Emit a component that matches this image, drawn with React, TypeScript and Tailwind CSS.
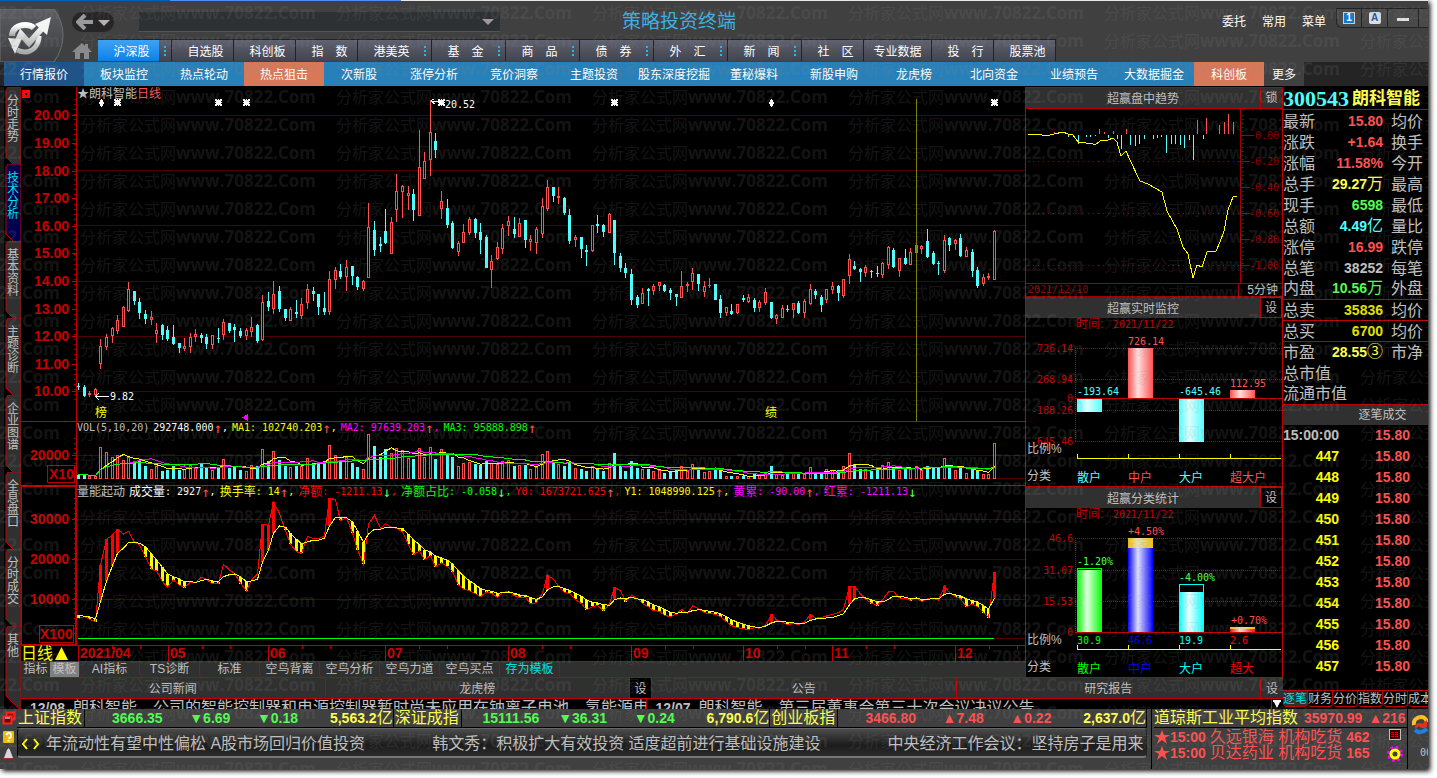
import React from "react";
import clsx from "clsx";

const MAIN_TABS = [
  { label: "沪深股", menu: true, active: true },
  { label: "自选股" },
  { label: "科创板" },
  { label: "指　数" },
  { label: "港美英", menu: true },
  { label: "基　金", menu: true },
  { label: "商　品", menu: true },
  { label: "债　券", menu: true },
  { label: "外　汇", menu: true },
  { label: "新　闻", menu: true },
  { label: "社　区" },
  { label: "专业数据", wide: true },
  { label: "投　行" },
  { label: "股票池" },
];

const SUB_TABS = [
  { label: "行情报价", style: "w-20 bg-[#205488]" },
  { label: "板块监控", style: "w-20" },
  { label: "热点轮动", style: "w-20" },
  { label: "热点狙击", style: "w-20 bg-[#d87858]" },
  { label: "次新股", style: "w-[70px]" },
  { label: "涨停分析", style: "w-20" },
  { label: "竞价洞察", style: "w-20" },
  { label: "主题投资", style: "w-20" },
  { label: "股东深度挖掘", style: "w-20" },
  { label: "董秘爆料", style: "w-20" },
  { label: "新股申购", style: "w-20" },
  { label: "龙虎榜", style: "w-20" },
  { label: "北向资金", style: "w-20" },
  { label: "业绩预告", style: "w-20" },
  { label: "大数据掘金", style: "w-20" },
  { label: "科创板", style: "w-[70px] bg-[#d87858]" },
];

const SIDE_TABS = ["分时走势", "技术分析", "基本资料", "主题诊断", "企业图谱", "全息盘口", "分时成交"];

const INDICATOR_TABS = ["AI指标", "TS诊断", "标准", "空鸟背离", "空鸟分析", "空鸟力道", "空鸟买点"];

// direction, high, body top, body bottom, low - in thirds of a pixel
const CANDLES = `d 893 902 906 915,d 899 905 933 936,u 918 925 930 936,u 908 912 930 936,u 762 783 837 852,u 747 757 786 795,u 726 730 753 774,u 690 705 738 747,u 663 667 726 726,u 591 612 678 681,
d 618 618 648 660,d 639 650 684 702,d 675 687 703 717,u 678 696 706 720,u 714 735 747 774,d 716 719 751 765,d 723 735 763 768,d 720 755 777 781,d 774 774 790 804,u 759 783 792 798,
u 744 756 786 804,u 732 748 756 771,d 744 750 759 774,d 747 755 777 792,u 750 750 779 792,d 729 759 762 774,u 702 711 750 765,d 714 714 738 744,d 717 726 736 771,d 729 738 752 759,
u 729 735 752 765,u 696 726 742 756,d 717 720 768 774,u 630 650 765 768,d 621 648 667 678,u 588 627 672 687,d 603 618 672 681,d 672 672 699 708,u 666 672 708 708,d 645 681 686 699,
u 639 657 692 702,u 597 612 654 672,d 606 617 627 648,d 627 627 666 690,d 621 669 680 690,u 558 582 681 690,u 546 555 584 612,d 537 558 576 582,u 525 546 576 618,d 543 543 573 600,
d 573 576 606 615,u 585 588 612 618,u 354 426 578 579,d 408 434 495 513,d 456 477 483 501,d 372 437 474 477,u 396 411 507 507,u 267 318 375 411,u 300 303 321 399,u 303 323 333 375,
d 312 327 375 408,u 135 246 393 393,u 201 228 282 282,u 45 141 225 273,d 144 168 195 219,u 318 348 372 402,d 342 369 420 429,d 408 414 489 492,u 468 474 501 513,u 417 441 474 474,
u 396 402 444 450,d 399 402 444 459,d 414 441 465 507,d 450 456 549 549,u 510 528 555 609,u 471 486 522 525,u 417 429 492 507,u 393 408 423 453,d 396 432 447 459,u 399 414 456 456,
d 405 405 465 489,u 450 462 471 498,u 426 432 474 507,u 339 363 447 459,u 285 306 372 378,d 306 306 333 351,u 306 333 339 357,d 336 339 384 390,d 372 390 468 477,u 450 456 465 486,
d 456 456 492 519,d 480 495 501 543,u 420 420 498 501,d 390 417 423 444,d 417 420 441 456,u 384 387 444 444,d 405 405 504 540,d 504 513 549 561,d 534 549 564 579,d 552 567 645 660,
d 630 636 660 669,u 609 624 657 657,d 609 612 618 663,u 597 603 618 630,u 591 591 603 618,d 597 600 618 621,d 609 615 624 645,d 627 627 636 663,u 558 603 639 639,u 591 597 603 621,
u 549 564 591 615,d 567 567 597 618,u 588 603 621 636,u 579 599 603 609,d 597 597 645 645,d 630 642 684 699,u 666 666 684 693,d 657 678 687 690,u 657 657 684 687,d 630 639 645 651,
u 627 636 651 654,d 639 645 669 681,u 645 651 669 681,u 609 621 654 660,d 651 651 699 702,u 687 690 702 717,u 660 669 699 699,d 660 672 675 681,u 654 654 675 699,d 648 654 684 687,
u 642 648 684 699,u 597 612 657 660,d 612 618 630 642,d 630 636 660 681,u 612 612 645 654,u 591 603 615 627,d 600 603 624 648,u 582 582 633 639,u 507 522 573 597,d 528 543 552 555,
d 549 552 561 591,u 540 546 564 576,d 555 558 561 579,d 543 564 567 576,u 531 534 570 579,u 483 486 540 552,d 489 495 546 549,u 519 519 558 576,d 492 519 537 540,u 489 501 540 540,
u 471 480 504 522,u 480 483 492 507,d 432 468 516 519,d 498 504 537 540,d 528 534 537 570,u 450 465 558 564,d 456 459 480 498,u 462 465 477 495,d 447 459 513 516,u 486 495 516 516,
d 492 501 558 576,d 546 555 603 609,u 567 576 597 603,u 564 573 579 585,u 435 438 585 585`
  .split(",")
  .map((row) => {
    const [dir, ...rest] = row.trim().split(" ");
    const [high, top, bottom, low] = rest.map((n) => Math.round(Number(n) / 3) - 14);
    return { up: dir === "u", high, top, bottom, low };
  });

const toNumbers = (s: string) => s.trim().split(/\s+/).map(Number);

const VOLUME_TOPS = toNumbers(`
225 224 227 228 142 157 171 166 181 172 187 180 198 208 198 213 210 198 210 208 196 204 193 205 210 204 178 203 202 210
213 196 197 148 184 154 181 198 202 198 199 174 189 193 184 136 166 187 171 189 201 208 102 138 171 148 160 145 150 174
177 145 172 142 177 148 160 172 199 189 187 192 196 184 190 193 184 181 198 196 195 208 201 163 154 187 192 198 189 205
208 213 198 204 213 190 159 199 213 183 204 208 208 214 211 219 216 211 198 213 193 205 216 213 210 210 229 228 229 229
229 223 223 219 198 222 224 222 220 222 221 202 219 222 208 210 211 199 160 192 208 208 213 211 196 187 204 211 208 208
199 210 198 204 204 175 202 210 204 220 208 211 223 223 130`);

const ENERGY_FAST = toNumbers(`
655 650 658 665 495 418 405 388 402 394 427 434 470 508 512 545 562 540 556 562 547 547 532 538 552 550 493 510 520 550
572 540 522 373 376 307 340 392 433 455 460 409 416 416 408 294 300 362 353 398 449 493 372 346 385 371 382 385 395 434
464 453 479 467 500 489 500 515 555 567 572 581 590 576 580 592 578 574 587 592 592 612 608 580 525 538 558 578 580 599
611 629 620 616 632 612 562 572 604 586 596 611 620 632 634 646 650 642 628 640 618 626 638 641 643 650 665 677 683 686
689 682 685 676 643 660 667 674 670 674 666 643 655 652 648 643 638 628 559 559 582 597 610 616 600 576 575 594 596 601
592 605 597 595 600 559 578 590 596 620 612 620 638 653 517`);

const ENERGY_SLOW = toNumbers(`
646 649 651 656 605 543 497 460 444 428 427 430 440 462 480 502 522 530 537 545 545 547 542 538 543 545 530 524 522 530
545 543 538 486 450 400 378 382 400 418 432 425 421 421 414 378 352 352 353 366 393 427 402 388 388 382 382 384 385 403
420 434 449 456 468 474 481 492 513 528 542 554 566 571 574 580 578 576 580 585 586 593 598 590 570 560 560 565 571 580
589 600 607 609 614 616 599 594 596 592 597 598 606 614 621 628 637 640 636 637 632 629 631 634 637 641 650 659 667 673
677 681 683 678 669 664 664 667 669 671 670 661 657 656 654 652 647 641 614 597 592 594 599 605 606 598 588 588 592 596
594 598 598 596 597 583 580 585 588 597 602 606 617 627 594`);

const ENERGY_BURSTS = new Set([4, 5, 6, 7, 33, 34, 35, 45, 84, 96, 124, 131, 138, 139, 155, 164]);

const MONO = "font-['DejaVu_Sans_Mono','Noto_Sans_CJK_SC',monospace]";

const barX = (i: number) => Math.round(1 + i * 5.585);

function movingAverage(values: number[], size: number) {
  return values.map((_, i) => {
    const part = values.slice(Math.max(0, i - size + 1), i + 1);
    return part.reduce((a, b) => a + b, 0) / part.length;
  });
}

function toPoints(values: number[], offset: number) {
  return values.map((v, i) => `${barX(i) + 0.5},${(v / 3 - offset).toFixed(1)}`).join(" ");
}

function Watermark() {
  return (
    <svg className="pointer-events-none absolute inset-0 h-full w-full" aria-hidden="true">
      <defs>
        <pattern id="mark" width="256" height="28" x="80" y="0" patternUnits="userSpaceOnUse">
          <text y="19" fill="#8a8a8a" fillOpacity="0.14">
            <tspan className="font-['Noto_Sans_CJK_SC',sans-serif] text-[16px]">分析家公式网</tspan>
            <tspan className="font-['Open_Sans',sans-serif] text-[17px] font-bold">www.70822.Com</tspan>
          </text>
        </pattern>
      </defs>
      <rect width="100%" height="100%" fill="url(#mark)" />
    </svg>
  );
}

function Logo() {
  return (
    <svg width="64" height="53" viewBox="0 0 64 53" className="block">
      <defs>
        <linearGradient id="silver" x1="0" y1="0" x2="0" y2="1">
          <stop offset="0" stopColor="#ffffff" />
          <stop offset="1" stopColor="#a8a8a8" />
        </linearGradient>
        <linearGradient id="plate" x1="0" y1="0" x2="0" y2="1">
          <stop offset="0" stopColor="#5c5e62" />
          <stop offset="1" stopColor="#3a3c40" />
        </linearGradient>
      </defs>
      <path d="M0 0H54Q63 12 63 26T54 53H0Z" fill="url(#plate)" stroke="#6c6e72" />
      <g fill="none" stroke="url(#silver)">
        <path d="M12 27C12 20 18 16 25 16C29 16 32 17 34 19" strokeWidth="6" />
        <path d="M39 27C39 36 33 43 25 43C22 43 19 42 17 41" strokeWidth="5" />
        <path d="M14 40L21 25L29 34L45 16" strokeWidth="6" />
      </g>
      <path d="M51 8L47 26L35 15Z" fill="#f4f4f4" />
      <path d="M8 29L15 45L21 30Z" fill="#e4e4e4" />
    </svg>
  );
}

function Header() {
  return (
    <header className="flex h-[61px] bg-[#404040] text-xs text-white">
      <div className="w-16 shrink-0 pt-2">
        <Logo />
      </div>
      <div className="flex min-w-0 flex-1 flex-col">
        <div className="flex h-[38px] items-center pt-1 pl-2">
          <div className="flex h-5 w-[42px] items-center justify-center gap-1 rounded-full bg-[#262626]">
            <button aria-label="后退">
              <svg width="18" height="16" viewBox="0 0 18 16">
                <path d="M9 1L2 8L9 15M2 8H17" fill="none" stroke="#9a9a9e" strokeWidth="4" />
              </svg>
            </button>
            <button aria-label="历史">
              <svg width="12" height="7">
                <path d="M0 1H12L6 7Z" fill="#b8b0b0" />
              </svg>
            </button>
          </div>
          <div className="ml-[25px] flex h-5 w-[361px] items-center border-b border-[#555] bg-[#2d3134] pr-1.5">
            <input aria-label="地址" className="h-full min-w-0 flex-1 bg-transparent px-2 outline-none" />
            <button aria-label="展开地址">
              <svg width="12" height="6">
                <path d="M0 0H12L6 6Z" fill="#a09898" />
              </svg>
            </button>
          </div>
          <h1 className="ml-[122px] text-[19px] leading-5 whitespace-nowrap text-[#3cb0e4]">策略投资终端</h1>
          <nav className="ml-auto flex gap-4">
            <a href="#trade">委托</a>
            <a href="#common">常用</a>
            <a href="#menu">菜单</a>
          </nav>
          <div className="mb-2 ml-2.5 flex h-5 w-[92px] overflow-hidden rounded-bl-md border border-r-0 border-[#222] bg-[#4a4a4a]">
            <button aria-label="屏幕一" className="flex w-[25px] items-center justify-center border-r border-[#222]">
              <span className="flex h-3 w-3 items-center justify-center border border-[#ccc] bg-[#1878d0] text-[10px] leading-3 font-bold">1</span>
            </button>
            <button aria-label="字体" className="flex w-[26px] items-center justify-center border-r border-[#222]">
              <span className="flex h-3 w-3 items-center justify-center rounded-xs bg-[#ddd] text-[10px] leading-3 font-bold text-[#1858b8]">A</span>
            </button>
            <button aria-label="最小化" className="flex w-[31px] items-center justify-center border-r border-[#222]">
              <span className="mt-0.5 h-[3px] w-3 bg-[#e8e0e0]" />
            </button>
          </div>
        </div>
        <nav className="flex h-[23px] pl-2">
          <a href="#home" aria-label="首页" className="flex w-[26px] items-center">
            <svg width="20" height="17" viewBox="0 0 20 17">
              <path d="M10 1L0 10H3V17H8V11H12V17H17V10H20L16 6V2H13V4Z" fill="#8a8a8e" />
            </svg>
          </a>
          {MAIN_TABS.map((tab) => (
            <button
              key={tab.label}
              className={clsx(
                "flex h-[22px] shrink-0 border-t border-r border-t-[#222] border-r-[#222] bg-linear-to-b from-[#5f6270] to-[#42444e]",
                tab.menu ? "w-[74px]" : tab.wide ? "w-[68px]" : "w-[62px]"
              )}
            >
              <span className={clsx("flex h-full flex-1 items-center justify-center pt-0.5 whitespace-nowrap", !tab.wide && "pl-1.5", tab.active && "bg-linear-to-b from-[#38a4f8] to-[#0880e8]")}>
                {tab.label}
              </span>
              {tab.menu && (
                <span className="flex h-full w-3 flex-col items-center justify-center gap-0.5">
                  <i className="h-0.5 w-0.5 bg-[#10c0ff]" />
                  <i className="h-0.5 w-0.5 bg-[#10c0ff]" />
                  <i className="h-0.5 w-0.5 bg-[#10c0ff]" />
                </span>
              )}
            </button>
          ))}
        </nav>
      </div>
    </header>
  );
}

function SubNav() {
  return (
    <nav className="flex h-[25px] border-b border-black bg-[#242424] pl-1 text-xs text-white">
      <div className="flex bg-[#2880b8]">
        {SUB_TABS.map((tab) => (
          <button key={tab.label} className={clsx("h-full pt-0.5 whitespace-nowrap", tab.style)}>
            {tab.label}
          </button>
        ))}
      </div>
      <button className="w-10 bg-[#404040] pt-0.5">更多</button>
    </nav>
  );
}

function SideTab({ label, active, last }: { label: string; active?: boolean; last?: boolean }) {
  return (
    <button className={clsx("relative flex w-full justify-center pt-2", last ? "flex-1" : "h-[77px]", active ? "text-[#00e0e0]" : "text-[#c0c0c0]")}>
      <svg className="absolute inset-0 block" width="16" height="84">
        <path d="M1 70V3L3 0H16V83H14Z" fill={active ? "#000050" : "#303030"} stroke="#c00000" />
      </svg>
      <span className="relative w-3 text-xs leading-3 break-all">{label}</span>
    </button>
  );
}

function PriceAxis() {
  return (
    <svg width="55" height="334" className="block shrink-0" shapeRendering="crispEdges">
      <rect x="2" y="4" width="5" height="5" fill="none" stroke="#ff0000" strokeWidth="3" />
      <path d="M53.5 12V313" stroke="#c00000" strokeDasharray="1 4" />
      {Array.from({ length: 11 }, (_, i) => {
        const y = Math.round(28.3 + i * 27.6);
        return (
          <g key={i}>
            <path d={`M51 ${y + 0.5}H55`} stroke="#c00000" />
            <text x="48" y={y + 5} textAnchor="end" className="fill-[#c80000] text-sm font-bold">
              {(20 - i).toFixed(2)}
            </text>
          </g>
        );
      })}
    </svg>
  );
}

const FLAGS = [
  { x: 24, small: true },
  { x: 40 },
  { x: 141 },
  { x: 169 },
  { x: 364 },
  { x: 537 },
  { x: 694, small: true },
  { x: 917 },
];

function PriceChart() {
  return (
    <svg className="block h-[322px] w-full" shapeRendering="crispEdges">
      {[16, 71, 126, 182, 237, 292].map((y) => (
        <line key={y} x1="0" x2="100%" y1={y + 0.5} y2={y + 0.5} stroke="#500000" />
      ))}
      {CANDLES.map((c, i) => {
        const x = barX(i);
        const h = Math.max(1, c.bottom - c.top);
        return (
          <g key={i} fill={c.up ? "#ff5050" : "#50ffff"}>
            <rect x={x} y={c.high} width="1" height={Math.max(1, c.low - c.high)} />
            <rect x={x - 1} y={c.top} width="3" height={h} />
            {c.up && h > 2 && <rect x={x} y={c.top + 1} width="1" height={h - 2} fill="#000" />}
          </g>
        );
      })}
      <path d="M839.5 0V322" stroke="#808000" />
      {FLAGS.map((f) => (
        <path
          key={f.x}
          d={f.small ? `M${f.x} 0h1v1h1v2h1v2h-1v2h-1v1h-1v-1h-1v-2h-1v-2h1v-2h1z` : `M${f.x - 3} 0h2v1h1v-1h1v1h1v-1h2v2h-1v1h1v1h-1v1h1v2h-2v-1h-1v1h-1v-1h-1v1h-2v-2h1v-1h-1v-1h1v-1h-1z`}
          fill="#fff"
        />
      ))}
      <path d="M354 2H366M354 2L358 -1M354 2L358 5" fill="none" stroke="#fff" />
      <text x="368" y="9" className={clsx(MONO, "fill-white text-[10px]")}>20.52</text>
      <path d="M18.5 297.5H32M18.5 297.5L22 294M18.5 297.5L22 301" fill="none" stroke="#fff" />
      <text x="33" y="301" className={clsx(MONO, "fill-white text-[10px]")}>9.82</text>
      <text x="18" y="318" className="fill-[#ffff00] text-xs">榜</text>
      <text x="688" y="318" className="fill-[#ffff00] text-xs">绩</text>
      <path d="M165 318.5L171 315V322Z" fill="#ff00ff" />
    </svg>
  );
}

type LegendItem = { name?: string; code?: string; value: string; trend?: "up" | "down"; color: string };

function Legend({ title, items }: { title: string; items: LegendItem[] }) {
  return (
    <div className={clsx(MONO, "flex h-3 items-center gap-1 text-[10px] leading-3 whitespace-pre")}>
      {title.startsWith("VOL") ? <span className="text-[#c0c0c0]">{title}</span> : <span className="text-xs leading-3 text-[#c0c0c0]">{title}</span>}
      {items.map((item, i) => (
        <span key={i} className={clsx("flex items-center", item.color)}>
          {item.name && <span className="text-xs leading-3">{item.name}</span>}
          {item.code}
          {(item.name || item.code) && ": "}
          {item.value}
          <span className={clsx("text-sm leading-3", item.trend === "down" ? "text-[#50ff50]" : "text-[#ff5050]")}>{item.trend === "down" ? "↓" : "↑"}</span>
          {i < items.length - 1 && ","}
        </span>
      ))}
    </div>
  );
}

const VOLUME_LEGEND: LegendItem[] = [
  { value: "292748.000", color: "text-white" },
  { code: "MA1", value: "102740.203", color: "text-[#ffff00]" },
  { code: "MA2", value: "97639.203", color: "text-[#ff00ff]" },
  { code: "MA3", value: "95888.898", color: "text-[#00ff00]" },
];

const ENERGY_LEGEND: LegendItem[] = [
  { name: "成交量", value: "2927", color: "text-white" },
  { name: "换手率", value: "14", color: "text-[#ffff00]" },
  { name: "净额", value: "-1211.13", trend: "down", color: "text-[#ff0000]" },
  { name: "净额占比", value: "-0.058", trend: "down", color: "text-[#00ff00]" },
  { code: "Y0", value: "1673721.625", color: "text-[#ff0000]" },
  { code: "Y1", value: "1048990.125", color: "text-[#ffff00]" },
  { name: "黄累", value: "-90.00", color: "text-[#ff00ff]" },
  { name: "红累", value: "-1211.13", trend: "down", color: "text-[#ff00ff]" },
];

function VolumeChart() {
  return (
    <svg className="block h-[51px] w-full overflow-visible" shapeRendering="crispEdges">
      <line x1="0" x2="100%" y1="21.5" y2="21.5" stroke="#500000" />
      <line x1="0" x2="100%" y1="44.5" y2="44.5" stroke="#500000" />
      {VOLUME_TOPS.map((t, i) => {
        const y = Math.round(t / 3) - 34;
        return CANDLES[i].up ? (
          <rect key={i} x={barX(i) - 0.5} y={y + 0.5} width="2" height={44 - y} fill="#000" stroke="#ff5050" />
        ) : (
          <rect key={i} x={barX(i) - 1} y={y} width="3" height={45 - y} fill="#50ffff" />
        );
      })}
      <g fill="none">
        <polyline points={toPoints(movingAverage(VOLUME_TOPS, 5), 34)} stroke="#ffff00" />
        <polyline points={toPoints(movingAverage(VOLUME_TOPS, 10), 34)} stroke="#ff00ff" />
        <polyline points={toPoints(movingAverage(VOLUME_TOPS, 20), 34)} stroke="#00ff00" />
      </g>
    </svg>
  );
}

function EnergyChart() {
  return (
    <svg className="block h-[147px] w-full" shapeRendering="crispEdges">
      {[21, 61, 101].map((y) => (
        <line key={y} x1="0" x2="100%" y1={y + 0.5} y2={y + 0.5} stroke="#500000" />
      ))}
      <line x1="917" x2="100%" y1="140.5" y2="140.5" stroke="#500000" />
      <line x1="1" x2="917" y1="140.5" y2="140.5" stroke="#00ff00" />
      {ENERGY_FAST.map((fast, i) => {
        const slow = ENERGY_SLOW[i];
        const top = Math.round(Math.min(fast, slow) / 3) - 98;
        const h = Math.round(Math.abs(fast - slow) / 3);
        if (ENERGY_BURSTS.has(i)) return <rect key={i} x={barX(i) - 1} y={top} width="3" height={h} fill="#ff0000" />;
        if (fast > slow + 3) return <rect key={i} x={barX(i) - 1} y={top} width="3" height={h} fill="#ffff00" />;
        return null;
      })}
      <polyline points={toPoints(ENERGY_FAST, 98)} fill="none" stroke="#ff0000" />
      <polyline points={toPoints(ENERGY_SLOW, 98)} fill="none" stroke="#ffff00" />
    </svg>
  );
}

const MONTHS = [
  { x: 1, label: "2021/04" },
  { x: 91, label: "05" },
  { x: 191, label: "06" },
  { x: 308, label: "07" },
  { x: 431, label: "08" },
  { x: 554, label: "09" },
  { x: 666, label: "10" },
  { x: 755, label: "11" },
  { x: 878, label: "12" },
];

function Charts() {
  return (
    <div className="flex min-w-0 flex-1 flex-col">
      <section className="flex border-b border-[#c00000]">
        <PriceAxis />
        <div className="min-w-0 flex-1 border-l border-[#c00000]">
          <div className="flex h-3 text-xs leading-[14px] text-[#c0c0c0]">
            ★朗科智能<span className="text-[#ff5050]">日线</span>
          </div>
          <PriceChart />
        </div>
      </section>
      <section className="flex border-b border-[#c00000]">
        <svg width="55" height="63" className="block shrink-0" shapeRendering="crispEdges">
          <path d="M51 33.5H55" stroke="#c00000" />
          <path d="M53.5 16V60" stroke="#c00000" strokeDasharray="1 4" />
          <rect x="26.5" y="43.5" width="27" height="17" fill="none" stroke="#c00000" />
          <text x="48" y="38" textAnchor="end" className="fill-[#c80000] text-sm font-bold">20000</text>
          <text x="28" y="57" className="fill-[#c80000] text-sm font-bold">X10</text>
        </svg>
        <div className="min-w-0 flex-1 border-l border-[#c00000]">
          <Legend title="VOL(5,10,20)" items={VOLUME_LEGEND} />
          <VolumeChart />
        </div>
      </section>
      <section className="flex border-b border-[#c00000]">
        <svg width="55" height="159" className="block shrink-0" shapeRendering="crispEdges">
          <rect x="0.5" y="0.5" width="54" height="158" fill="none" stroke="#c00000" />
          <path d="M53.5 12V150" stroke="#c00000" strokeDasharray="1 4" />
          {["30000", "20000", "10000"].map((label, i) => (
            <g key={label}>
              <path d={`M51 ${33.5 + i * 40}H55`} stroke="#c00000" />
              <text x="48" y={38 + i * 40} textAnchor="end" className="fill-[#c80000] text-sm font-bold">
                {label}
              </text>
            </g>
          ))}
          <rect x="18.5" y="139.5" width="34" height="17" fill="none" stroke="#c00000" />
          <text x="19" y="153" className="fill-[#c80000] text-sm font-bold">X100</text>
        </svg>
        <div className="min-w-0 flex-1 border-l border-[#c00000]">
          <Legend title="量能起动" items={ENERGY_LEGEND} />
          <EnergyChart />
        </div>
      </section>
      <div className="flex h-4 border-b border-[#c00000]">
        <button className="flex w-14 items-center gap-0.5 text-base leading-4 whitespace-nowrap text-[#ffff00]">
          日线
          <svg width="13" height="13">
            <path d="M6.500 0L13 13H0Z" fill="#ffff00" />
          </svg>
        </button>
        <svg className="block h-[15px] flex-1" shapeRendering="crispEdges">
          {MONTHS.map((m) => (
            <g key={m.label}>
              <path d={`M${m.x + 0.5} 0V15M${m.x + 34.5} 0V3M${m.x + 62.5} 0V3`} stroke="#c00000" />
              <text x={m.x + 2} y="12" className="fill-[#c80000] text-sm font-bold">
                {m.label}
              </text>
            </g>
          ))}
        </svg>
      </div>
      <div className="flex h-4 overflow-hidden border-b border-[#c00000] bg-[#303030] text-xs leading-[15px] text-[#c0c0c0]">
        <button className="w-[29px] whitespace-nowrap">指标</button>
        <button className="w-[29px] bg-[#808080] whitespace-nowrap">模板</button>
        {INDICATOR_TABS.map((label) => (
          <button key={label} className="w-[60px] rounded-bl border-l border-[#c00000] whitespace-nowrap">
            {label}
          </button>
        ))}
        <button className="w-[61px] border-x border-[#c00000] whitespace-nowrap text-[#00e0e0]">存为模板</button>
      </div>
    </div>
  );
}

function PanelHeader({ title, action, boxed }: { title: string; action: string; boxed?: boolean }) {
  return (
    <div className={clsx("flex shrink-0 bg-[#303030] text-xs text-[#c0c0c0]", boxed ? "h-[22px] border-y border-[#c00000]" : "h-[21px]")}>
      <h2 className="flex flex-1 items-center justify-center pt-0.5">{title}</h2>
      <button className={clsx("w-[22px] border border-[#c00000]", boxed ? "border-y-0 border-r-0" : "bg-black")}>{action}</button>
    </div>
  );
}

const TREND_DOWN = [
  [42, 28], [52, 35], [60, 28], [64, 28], [69, 27], [82, 29], [91, 30], [95, 40], [104, 36], [109, 37], [113, 35], [118, 30],
  [127, 30], [131, 29], [135, 28], [140, 44], [145, 35], [149, 35], [154, 36], [158, 39], [163, 31], [167, 51], [177, 30],
];
const TREND_UP = [[28, 23], [73, 20], [78, 23], [87, 22], [100, 20], [171, 11], [180, 9], [193, 16], [198, 13], [202, 5], [207, 13]];

function TrendPanel() {
  return (
    <section>
      <PanelHeader title="超赢盘中趋势" action="锁" boxed />
      <svg className="block h-[174px] w-full" shapeRendering="crispEdges">
        {[52, 104, 156].map((y) => (
          <path key={y} d={`M2 ${y + 0.5}H214`} stroke="#900000" strokeDasharray="1 4" />
        ))}
        <path d="M214.5 0V174" stroke="#a00000" />
        <path d="M216.5 6V170" stroke="#a00000" strokeDasharray="1 3" />
        {["0.00", "-0.20", "-0.40", "-0.60", "-0.80", "-1.00"].map((label, i) => (
          <g key={label}>
            <path d={`M215 ${26.5 + i * 26}H${i ? 224 : 228}`} stroke="#a00000" />
            <text x="253" y={30 + i * 26} textAnchor="end" className={clsx(MONO, "fill-[#900000] text-[10px]")}>
              {label}
            </text>
          </g>
        ))}
        {TREND_DOWN.map(([x, y]) => (
          <rect key={x} x={x} y="26" width="1" height={y - 26} fill="#50ffff" />
        ))}
        {TREND_UP.map(([x, y]) => (
          <rect key={x} x={x} y={y} width="1" height={25 - y} fill="#ff5050" />
        ))}
        <polyline
          points="2,25 14,25 16,26 24,26 28,25 37,23 42,25 47,26 52,33 67,35 69,36 74,32 82,31 87,29 91,33 95,47 100,42 104,51 114,72 122,75 129,79 136,83 141,102 151,120 157,138 162,145 167,169 171,156 176,158 181,143 190,142 194,133 198,122 202,101 207,88 211,87"
          fill="none"
          stroke="#ffff00"
        />
      </svg>
      <div className="flex h-3.5 items-center border-y border-[#a00000] text-xs leading-3">
        <span className={clsx(MONO, "flex-1 pl-0.5 text-[10px] text-[#900000]")}>2021/12/10</span>
        <span className="h-full border-l border-[#a00000] pr-1 pl-2 leading-3 text-[#c0c0c0]">5分钟</span>
      </div>
    </section>
  );
}

const BAR_X = [51, 102, 153, 204];

function BarScale({ y, names, colors }: { y: number; names: string[]; colors: string[] }) {
  return (
    <g>
      <line x1="51" x2="255" y1={y + 0.5} y2={y + 0.5} stroke="#ffff00" />
      {BAR_X.map((x, i) => (
        <g key={x}>
          <path d={`M${x + 0.5} ${y}V${y - 4}`} stroke="#ffff00" />
          <text x={x} y={y + 24} fill={colors[i]} className="text-xs">
            {names[i]}
          </text>
        </g>
      ))}
      <text x="1" y={y + 22} fill="#c0c0c0" className="text-xs">分类</text>
    </g>
  );
}

function Shade({ id, color, light }: { id: string; color: string; light: string }) {
  return (
    <linearGradient id={id}>
      <stop offset="0" stopColor={color} />
      <stop offset="0.4" stopColor={light} />
      <stop offset="1" stopColor={color} />
    </linearGradient>
  );
}

function AxisLabels({ rows }: { rows: { label: string; y: number }[] }) {
  return (
    <g>
      {rows.map((r) => (
        <g key={r.label}>
          <path d={`M49 ${r.y + 0.5}H256`} stroke="#c00000" strokeDasharray={r.label === "0" ? undefined : "1 1"} />
          <text x="47" y={r.y + 4} textAnchor="end" className={clsx(MONO, "fill-[#c00000] text-[10px]")}>
            {r.label}
          </text>
        </g>
      ))}
      <text x="50" y="10" className="fill-[#c00000] text-xs">时间:</text>
      <text x="87" y="10" className={clsx(MONO, "fill-[#c00000] text-[10px]")}>2021/11/22</text>
    </g>
  );
}

function MonitorPanel() {
  const values = [
    { x: 51, y: 77, label: "-193.64", color: "#50ffff" },
    { x: 102, y: 27, label: "726.14", color: "#ff5050" },
    { x: 153, y: 77, label: "-645.46", color: "#50ffff" },
    { x: 204, y: 69, label: "112.95", color: "#ff5050" },
  ];
  return (
    <section>
      <PanelHeader title="超赢实时监控" action="设" />
      <svg className="block h-[168px] w-full" shapeRendering="crispEdges">
        <defs>
          <Shade id="rose" color="#ff5050" light="#ffe0e0" />
          <Shade id="aqua" color="#50ffff" light="#e0ffff" />
        </defs>
        <AxisLabels
          rows={[
            { label: "726.14", y: 30 },
            { label: "268.94", y: 61 },
            { label: "0", y: 80 },
            { label: "-188.26", y: 92 },
            { label: "-645.46", y: 123 },
          ]}
        />
        <path d="M49.5 30V124" stroke="#c00000" strokeDasharray="1 1" />
        <rect x="51" y="81" width="25" height="13" fill="url(#aqua)" />
        <rect x="102" y="30" width="25" height="50" fill="url(#rose)" />
        <rect x="153" y="81" width="25" height="43" fill="url(#aqua)" />
        <rect x="204" y="72" width="25" height="8" fill="url(#rose)" />
        {values.map((v) => (
          <text key={v.label} x={v.x} y={v.y} fill={v.color} className={clsx(MONO, "text-[10px]")}>
            {v.label}
          </text>
        ))}
        <text x="1" y="135" fill="#c0c0c0" className="text-xs">比例%</text>
        <BarScale y={140} names={["散户", "中户", "大户", "超大户"]} colors={["#50ffff", "#ff5050", "#50ffff", "#ff5050"]} />
      </svg>
    </section>
  );
}

function CategoryPanel() {
  const values = [
    { x: 51, y: 57, label: "-1.20%", color: "#50ff50" },
    { x: 102, y: 27, label: "+4.50%", color: "#ff5050" },
    { x: 153, y: 73, label: "-4.00%", color: "#50ff50" },
    { x: 205, y: 116, label: "+0.70%", color: "#ff5050" },
    { x: 51, y: 136, label: "30.9", color: "#00ff00" },
    { x: 102, y: 136, label: "46.6", color: "#0000ff" },
    { x: 153, y: 136, label: "19.9", color: "#00ffff" },
    { x: 204, y: 136, label: "2.6", color: "#ff0000" },
  ];
  return (
    <section className="border-y border-[#c00000]">
      <PanelHeader title="超赢分类统计" action="设" />
      <svg className="block h-[169px] w-full" shapeRendering="crispEdges">
        <defs>
          <Shade id="green" color="#00ff00" light="#e0ffe0" />
          <Shade id="blue" color="#0000ff" light="#e0e0ff" />
          <Shade id="cyan" color="#00ffff" light="#f0ffff" />
          <Shade id="red" color="#ff0000" light="#ffe0e0" />
          <Shade id="gold" color="#f0c000" light="#e8e0c0" />
        </defs>
        <AxisLabels
          rows={[
            { label: "46.6", y: 30 },
            { label: "31.07", y: 62 },
            { label: "15.53", y: 93 },
            { label: "0", y: 124 },
          ]}
        />
        <path d="M49.5 30V124" stroke="#c00000" strokeDasharray="1 1" />
        <rect x="51.5" y="60.5" width="24" height="63" fill="#000" stroke="#00ff00" />
        <rect x="51" y="62" width="25" height="62" fill="url(#green)" />
        <rect x="102" y="40" width="25" height="84" fill="url(#blue)" />
        <rect x="102" y="30" width="25" height="10" fill="url(#gold)" />
        <rect x="153.5" y="76.5" width="24" height="47" fill="#000" stroke="#00ffff" />
        <rect x="153" y="84" width="25" height="40" fill="url(#cyan)" />
        <rect x="204" y="119" width="25" height="2" fill="url(#gold)" />
        <rect x="204" y="121" width="25" height="3" fill="url(#red)" />
        {values.map((v) => (
          <text key={v.label} x={v.x} y={v.y} fill={v.color} className={clsx(MONO, "text-[10px]")}>
            {v.label}
          </text>
        ))}
        <text x="1" y="136" fill="#c0c0c0" className="text-xs">比例%</text>
        <BarScale y={141} names={["散户", "中户", "大户", "超大"]} colors={["#00ff00", "#0000ff", "#00ffff", "#ff0000"]} />
      </svg>
    </section>
  );
}

const QUOTES = [
  { label: "最新", value: "15.80", pair: "均价", color: "text-[#ff5050]" },
  { label: "涨跌", value: "+1.64", pair: "换手", color: "text-[#ff5050]" },
  { label: "涨幅", value: "11.58%", pair: "今开", color: "text-[#ff5050]" },
  { label: "总手", value: "29.27", unit: "万", pair: "最高", color: "text-[#ffff50]" },
  { label: "现手", value: "6598", pair: "最低", color: "text-[#50ff50]" },
  { label: "总额", value: "4.49", unit: "亿", pair: "量比", color: "text-[#50ffff]" },
  { label: "涨停", value: "16.99", pair: "跌停", color: "text-[#ff5050]" },
  { label: "总笔", value: "38252", pair: "每笔", color: "text-[#c0c0c0]" },
  { label: "内盘", value: "10.56", unit: "万", pair: "外盘", color: "text-[#50ff50]", line: true },
  { label: "总卖", value: "35836", pair: "均价", color: "text-[#e0e000]", line: true },
  { label: "总买", value: "6700", pair: "均价", color: "text-[#e0e000]", line: true },
  { label: "市盈", value: "28.55", unit: "③", pair: "市净", color: "text-[#ffff50]" },
  { label: "总市值", value: "", pair: "", color: "" },
  { label: "流通市值", value: "", pair: "", color: "", line: true },
];

const TRADES = ["15:00:00", "447", "448", "449", "450", "451", "452", "453", "454", "455", "456", "457"];

function QuotePanel() {
  return (
    <aside className="flex w-[145px] shrink-0 flex-col overflow-hidden text-base text-[#c0c0c0]">
      <h2 className="flex h-[23px] items-center justify-between border-b border-[#c00000] pt-0.5 pr-2 leading-5 font-bold whitespace-nowrap">
        <span className="font-['Liberation_Serif',serif] text-[22px] text-[#50ffff]">300543</span>
        <span className="text-[17px] text-[#ffff50]">朗科智能</span>
      </h2>
      <table className="w-full table-fixed border-collapse leading-[18px]">
        <tbody>
          {QUOTES.map((q) => (
            <tr key={q.label} className={clsx("h-[21px]", q.line && "border-b border-[#c00000]")}>
              <th scope="row" className="w-8 p-0 pt-0.5 text-left font-normal whitespace-nowrap">{q.label}</th>
              <td className={clsx("p-0 text-right text-sm leading-[18px] font-bold whitespace-nowrap", q.color)}>
                {q.value}
                {q.unit && <span className="text-base leading-[18px] font-normal">{q.unit}</span>}
              </td>
              <th scope="row" className="w-[45px] p-0 pt-0.5 pl-2 text-left font-normal whitespace-nowrap">{q.pair}</th>
            </tr>
          ))}
        </tbody>
      </table>
      <h3 className="flex h-5 items-center justify-center bg-[#303030] pl-[54px] text-xs">逐笔成交</h3>
      <table className="w-full table-fixed border-collapse text-sm leading-5 font-bold">
        <tbody>
          {TRADES.map((t, i) => (
            <tr key={t} className="h-[21px]">
              <td className={clsx("w-14 p-0 text-right", i > 0 && "text-[#ffff00]")}>{t}</td>
              <td className="p-0 pr-[18px] text-right text-[#ff5050]">15.80</td>
            </tr>
          ))}
        </tbody>
      </table>
      <div className="mt-auto flex h-[19px] border-t border-[#c00000] text-xs whitespace-nowrap">
        {["逐笔", "财务", "分价", "指数", "分时", "成本"].map((t, i) => (
          <button
            key={t}
            className={clsx("mb-0.5 w-[25px] shrink-0 rounded-b border-r border-b border-[#c00000]", i === 0 && "bg-[#303030] text-[#00e0e0]")}
          >
            {t}
          </button>
        ))}
      </div>
    </aside>
  );
}

function NewsArea() {
  const cell = "flex-1 border-r border-[#c00000] pt-0.5";
  return (
    <div className="flex min-h-0 flex-1 flex-col">
      <div className="flex h-[21px] shrink-0 border-b border-[#c00000] bg-[#303030] text-xs text-[#c0c0c0]">
        <button className={cell}>公司新闻</button>
        <button className={cell}>龙虎榜</button>
        <button className="w-[22px] border-r border-[#c00000] bg-black pt-0.5">设</button>
        <button className={cell}>公告</button>
        <button className={cell}>研究报告</button>
        <button className="w-[22px] pt-0.5">设</button>
      </div>
      <div className="flex h-2.5 overflow-hidden text-base leading-[18px] whitespace-nowrap text-[#c0c0c0]">
        <a href="#news" className="flex flex-1 gap-2 overflow-hidden border-r border-[#c00000] pl-[9px]">
          <b className="text-sm leading-[18px]">12/08</b>
          <span className="w-[72px] shrink-0">朗科智能</span>
          公司的智能控制器和电源控制器暂时尚未应用在钠离子电池　氢能源电池
        </a>
        <a href="#notice" className="flex flex-1 gap-2 overflow-hidden pl-[9px]">
          <b className="text-sm leading-[18px]">12/07</b>
          <span className="w-[72px] shrink-0">朗科智能</span>
          第三届董事会第三十次会议决议公告
        </a>
        <button aria-label="向下滚动" className="w-3 border-l border-[#c00000]">
          <svg width="10" height="10">
            <path d="M1 1H9V3H8L5 9L2 3H1Z" fill="#fff" />
          </svg>
        </button>
      </div>
    </div>
  );
}

const INDEXES = [
  { name: "上证指数", price: "3666.35", change: "▼6.69", rate: "▼0.18", amount: "5,563.2", color: "text-[#50ff50]" },
  { name: "深证成指", price: "15111.56", change: "▼36.31", rate: "▼0.24", amount: "6,790.6", color: "text-[#50ff50]" },
  { name: "创业板指", price: "3466.80", change: "▲7.48", rate: "▲0.22", amount: "2,637.0", color: "text-[#ff5050]" },
];

const ALERTS = [
  { time: "15:00", name: "久远银海", count: "462" },
  { time: "15:00", name: "贝达药业", count: "165" },
];

function StatusBar() {
  return (
    <footer className="flex h-[60px] overflow-hidden bg-[#404040] text-base">
      <div className="flex w-[17px] shrink-0 flex-col items-center gap-1 pt-0.5">
        <svg width="14" height="15">
          <rect x="4.5" y="1.5" width="8" height="7" fill="#a00000" stroke="#ff2020" strokeWidth="2" />
          <rect x="1.5" y="5.5" width="8" height="7" fill="#700000" stroke="#ff2020" strokeWidth="2" />
          <path d="M3 7H8" stroke="#fff" />
        </svg>
        <svg width="14" height="14">
          <rect x="1" y="1" width="11" height="12" rx="1" fill="#f0c000" />
          <path d="M4.500 5Q5 3 7 3T9 5.500T6.500 8M6.500 10V11.500" fill="none" stroke="#fff" strokeWidth="2" />
        </svg>
        <svg width="14" height="13">
          <path d="M6.500 0L8 2L11 10H2L5 2Z" fill="#d8d8d8" />
          <path d="M1 10H12V11H1Z" fill="#a03030" />
        </svg>
      </div>
      <div className="min-w-0 flex-1 pr-1">
        <div className="flex h-[19px] border-b border-black leading-[18px] whitespace-nowrap">
          {INDEXES.map((x) => (
            <div key={x.name} className="grid flex-1 grid-cols-[68px_78fr_68fr_68fr_95fr] border-r border-black text-right">
              <span className="border-r border-black pl-px text-left text-[#ffff50]">{x.name}</span>
              <b className={clsx("text-sm leading-[18px]", x.color)}>{x.price}</b>
              <b className={clsx("text-sm leading-[18px]", x.color)}>{x.change}</b>
              <b className={clsx("text-sm leading-[18px]", x.color)}>{x.rate}</b>
              <span className="text-[#ffff50]">
                <b className="text-sm leading-[18px]">{x.amount}</b>亿
              </span>
            </div>
          ))}
        </div>
        <div className="flex h-[30px] items-center overflow-hidden rounded-sm border border-b-2 border-t-[#666] border-r-[#222] border-b-[#777] border-l-black bg-linear-to-b from-[#4c4c4c] via-[#1c1c1c] via-60% to-[#2c2c2c] pt-0.5 whitespace-nowrap text-[#c0c0c0]">
          <button aria-label="上一条" className="w-3">
            <svg width="12" height="12"><path d="M9 1L5 6L9 11" fill="none" stroke="#ffff00" strokeWidth="2" /></svg>
          </button>
          <button aria-label="下一条" className="mr-1 w-3">
            <svg width="12" height="12"><path d="M4 1L8 6L4 11" fill="none" stroke="#ffff00" strokeWidth="2" /></svg>
          </button>
          <div className="flex gap-[67px]">
            <a href="#t1">年流动性有望中性偏松 A股市场回归价值投资</a>
            <a href="#t2">韩文秀：积极扩大有效投资 适度超前进行基础设施建设</a>
            <a href="#t3">中央经济工作会议：坚持房子是用来</a>
          </div>
        </div>
      </div>
      <div className="w-[257px] shrink-0 border-x border-black pl-0.5 whitespace-nowrap text-[#ff5050]">
        <div className="flex h-[19px] gap-1.5 border-b border-black leading-[18px]">
          <span className="text-[#ffff50]">道琼斯工业平均指数</span>
          <b className="text-sm leading-[18px]">35970.99</b>
          <b className="text-sm leading-[18px]">▲216</b>
        </div>
        <div className="flex items-center justify-between pr-1">
          <div>
            {ALERTS.map((a) => (
              <a key={a.name} href="#alert" className="flex h-4 items-center gap-1 leading-4">
                <b className="flex items-center text-sm leading-4">
                  <svg width="16" height="14" viewBox="0 0 16 14">
                    <path d="M8 0L10 5H16L11 8L13 14L8 10L3 14L5 8L0 5H6Z" fill="#ff5050" />
                  </svg>
                  {a.time}
                </b>
                <span>{a.name} 机构吃货</span>
                <b className="text-sm leading-4">{a.count}</b>
              </a>
            ))}
          </div>
          <div className="flex flex-col items-center gap-1">
            <svg width="16" height="14">
              <rect x="2.500" y="1.500" width="11" height="10" fill="#300" stroke="#c0c0c0" />
              <path d="M4 4.500H12M4 6.500H12M4 8.500H12" stroke="#e00000" strokeDasharray="3 1" />
            </svg>
            <svg width="16" height="16" viewBox="0 0 16 16">
              <circle cx="8" cy="8" r="6.500" fill="none" stroke="#ff00ff" strokeWidth="3" strokeDasharray="2.500 2.600" />
              <circle cx="8" cy="8" r="4" fill="none" stroke="#ffff00" strokeWidth="3" />
            </svg>
          </div>
        </div>
      </div>
      <div className="flex w-5 shrink-0 flex-col gap-3 overflow-hidden pt-1.5 pl-1">
        <svg width="16" height="20" viewBox="0 0 16 20" className="shrink-0">
          <path d="M2 10C1 5 5 2 9 2S14 4 15 7" fill="none" stroke="#ffc020" strokeWidth="4" />
          <path d="M3 12C4 8 8 7 10 9L15 5V12C12 14 8 13 7 11L3 14Z" fill="#e83018" />
          <path d="M3 15C6 18 11 18 15 14" fill="none" stroke="#2080e0" strokeWidth="4" />
        </svg>
        <span className={clsx(MONO, "pl-2 text-[10px] leading-3 text-[#c0c0c0]")}>00</span>
      </div>
    </footer>
  );
}

export default function App() {
  return (
    <div className="min-h-screen bg-white pr-[9px] pb-2 font-['Liberation_Sans','Noto_Sans_CJK_SC',sans-serif]">
      <div className="relative overflow-hidden bg-black shadow-[2px_2px_5px_#000]">
        <div className="flex h-px">
          <div className="w-[170px] bg-[#0060b8]" />
          <div className="w-[231px] bg-[#4890f8]" />
          <div className="flex-1 bg-[#e8e8e8]" />
        </div>
        <Header />
        <SubNav />
        <main className="flex">
          <nav className="flex w-[21px] shrink-0 flex-col border-l-4 border-[#181818] pl-px">
            {SIDE_TABS.map((label) => (
              <SideTab key={label} label={label} active={label === "技术分析"} />
            ))}
            <SideTab label="其他" last />
          </nav>
          <div className="flex min-w-0 flex-1 flex-col">
            <div className="flex">
              <Charts />
              <div className="w-[258px] shrink-0 border-x border-[#c00000]">
                <TrendPanel />
                <MonitorPanel />
                <CategoryPanel />
              </div>
            </div>
            <NewsArea />
          </div>
          <QuotePanel />
        </main>
        <StatusBar />
        <Watermark />
      </div>
    </div>
  );
}
